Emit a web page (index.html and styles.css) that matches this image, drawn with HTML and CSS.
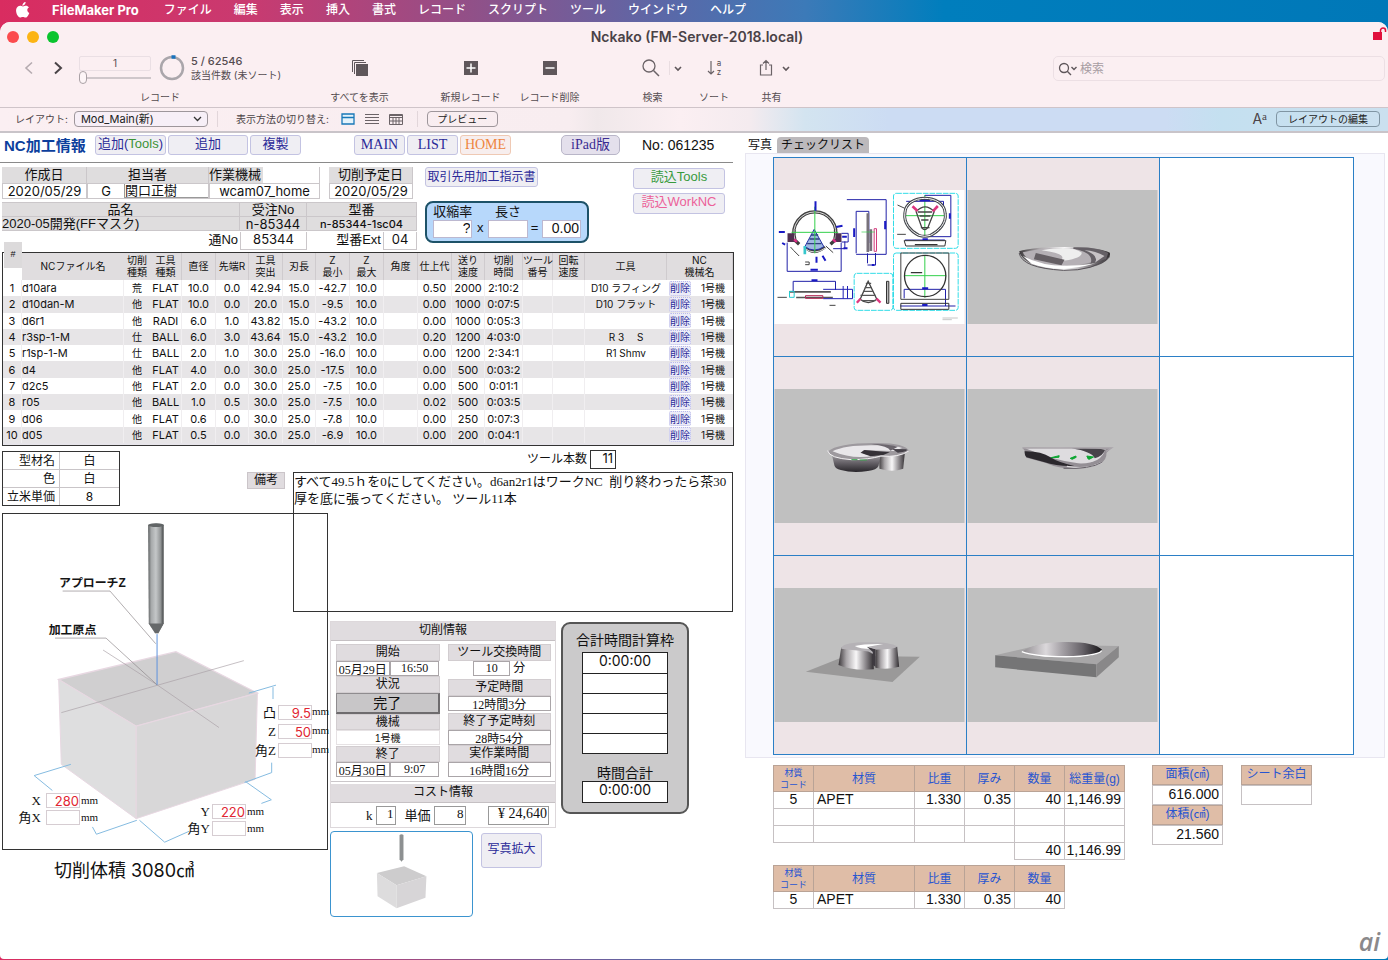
FILE: index.html
```html
<!DOCTYPE html>
<html lang="ja">
<head>
<meta charset="utf-8">
<title>Nckako (FM-Server-2018.local)</title>
<link rel="stylesheet" href="styles.css">
</head>
<body>
<nav class="menubar" aria-label="メニューバー">
  <svg class="apple" viewBox="0 0 14 16" aria-hidden="true"><path d="M9.6 0c.1 1-.3 1.900-.9 2.600-.6.7-1.500 1.200-2.300 1.100-.1-1 .4-1.900.9-2.500C7.900.5 8.900 0 9.600 0zM12.900 5.400c-1 .6-1.600 1.500-1.600 2.600 0 1.300.8 2.400 2 2.900-.3.9-.7 1.700-1.200 2.500-.7 1.100-1.500 2.200-2.600 2.200-1.100 0-1.500-.7-2.700-.7-1.300 0-1.700.7-2.700.7-1.100 0-2-1.200-2.700-2.300C.1 11.200-.5 7.800.8 5.800c.8-1.300 2-2 3.200-2 1.200 0 2 .7 3 .7s1.600-.7 3-.7c1.100 0 2.200.6 2.900 1.600z"/></svg>
  <strong class="app-name">FileMaker Pro</strong>
  <span>ファイル</span><span>編集</span><span>表示</span><span>挿入</span><span>書式</span><span>レコード</span><span>スクリプト</span><span>ツール</span><span>ウインドウ</span><span>ヘルプ</span>
</nav>

<div class="window">
  <header class="titlebar">
    <div class="lights"><i class="red"></i><i class="yellow"></i><i class="green"></i></div>
    <h1>Nckako (FM-Server-2018.local)</h1>
    <svg class="lock" viewBox="0 0 14 13" aria-hidden="true"><path d="M0 5h9v8H0z" fill="#e0103c"/><path d="M7.500 5.500V3.500a2.500 2.500 0 0 1 5 0V5" fill="none" stroke="#e0103c" stroke-width="1.500"/></svg>
  </header>

  <div class="toolbar">
    <div class="records">
      <div class="records-row">
        <button class="icon-btn" aria-label="前のレコード"><svg width="9" height="14" viewBox="0 0 9 14"><path d="M8 1.500 2 7l6 5.500" fill="none" stroke="#b5abb0" stroke-width="1.600"/></svg></button>
        <button class="icon-btn" aria-label="次のレコード"><svg width="9" height="14" viewBox="0 0 9 14"><path d="M1 1.500 7 7l-6 5.500" fill="none" stroke="#4a4448" stroke-width="2"/></svg></button>
        <div class="record-pos">
          <input class="pos-box" value="1" aria-label="レコード番号">
          <input class="pos-slider" type="range" min="1" max="62546" value="1" aria-label="レコード位置">
        </div>
        <svg class="pie" viewBox="0 0 26 26" aria-hidden="true"><circle cx="13" cy="13" r="11" fill="none" stroke="#aaa6ab" stroke-width="2.500"/><path d="M12.500 2h4" stroke="#1972bd" stroke-width="3.500"/></svg>
        <div class="found"><b>5 / 62546</b><span>該当件数 (未ソート)</span></div>
      </div>
      <span class="tool-label">レコード</span>
    </div>
    <button class="tool t-all"><span class="tool-icon"><svg width="18" height="18" viewBox="0 0 18 18"><path d="M1.500 13V1.500H13M3.500 15V3.500H15" fill="none" stroke="#5f575b"/><path d="M5 5h12v12H5z" fill="#5f575b"/></svg></span><span class="tool-label">すべてを表示</span></button>
    <button class="tool t-new"><span class="tool-icon"><svg width="14" height="14" viewBox="0 0 14 14"><path d="M0 0h14v14H0z" fill="#5f575b"/><path d="M2.500 7h9M7 2.500v9" stroke="#fff" stroke-width="1.500"/></svg></span><span class="tool-label">新規レコード</span></button>
    <button class="tool t-del"><span class="tool-icon"><svg width="14" height="14" viewBox="0 0 14 14"><path d="M0 0h14v14H0z" fill="#5f575b"/><path d="M2.500 7h9" stroke="#fff" stroke-width="1.500"/></svg></span><span class="tool-label">レコード削除</span></button>
    <button class="tool t-find"><span class="tool-icon"><svg width="44" height="20" viewBox="0 0 44 20"><circle cx="7" cy="8" r="6" fill="none" stroke="#6b6367" stroke-width="1.300"/><path d="m11.500 12.500 5.500 5.500" stroke="#6b6367" stroke-width="1.500"/><path d="M27.500 3v14" stroke="#e9dde1"/><path d="m33 9 3 3 3-3" fill="none" stroke="#5f575b" stroke-width="1.600"/></svg></span><span class="tool-label">検索</span></button>
    <button class="tool t-sort"><span class="tool-icon"><span class="sort"><svg width="8" height="16" viewBox="0 0 8 16"><path d="M4 1v13M1 11l3 3 3-3" fill="none" stroke="#6b6367" stroke-width="1.200"/></svg><span class="az"><span>a</span><span>z</span></span></span></span><span class="tool-label">ソート</span></button>
    <button class="tool t-share"><span class="tool-icon"><svg width="32" height="18" viewBox="0 0 32 18"><path d="M4 6H1.500v10h11V6H10M7 11V1.500M4 4.500l3-3 3 3" fill="none" stroke="#6b6367" stroke-width="1.200"/><path d="m24 8 3 3 3-3" fill="none" stroke="#5f575b" stroke-width="1.600"/></svg></span><span class="tool-label">共有</span></button>
    <label class="search"><svg width="20" height="14" viewBox="0 0 20 14"><circle cx="6" cy="6" r="4.500" fill="none" stroke="#5f575b" stroke-width="1.300"/><path d="m9 9 4 4M13.500 5l2.500 2.500L18.500 5" fill="none" stroke="#5f575b" stroke-width="1.400"/></svg><input placeholder="検索" aria-label="検索"></label>
  </div>

  <div class="layoutbar">
    <label for="layout">レイアウト:</label>
    <span class="select-wrap"><select id="layout"><option>Mod_Main(新)</option></select><svg width="9" height="6" viewBox="0 0 9 6"><path d="m1 1 3.500 3.500L8 1" fill="none" stroke="#333" stroke-width="1.300"/></svg></span>
    <i class="bar-sep"></i>
    <span class="view-label">表示方法の切り替え:</span>
    <button class="icon-btn" aria-label="フォーム形式"><svg width="14" height="12" viewBox="0 0 14 12"><path d="M1 1h12v10H1zM1 4.500h12" fill="#e4f3fb" stroke="#1878b8" stroke-width="1.300"/></svg></button>
    <button class="icon-btn" aria-label="リスト形式"><svg width="14" height="12" viewBox="0 0 14 12"><path d="M0 1.500h14M0 4.500h14M0 7.500h14M0 10.500h14" stroke="#6b6367"/></svg></button>
    <button class="icon-btn" aria-label="表形式"><svg width="14" height="12" viewBox="0 0 14 12"><path d="M.5 1.500h13v10H.5zM.5 4.500h13M.5 8h13M4 4.500v7M7 4.500v7M10 4.500v7M.5 2.500h13" fill="none" stroke="#6b6367"/></svg></button>
    <i class="bar-sep"></i>
    <button class="mac-btn preview">プレビュー</button>
    <span class="aa">A<sup>a</sup></span>
    <button class="mac-btn edit">レイアウトの編集</button>
  </div>

  <main class="content">
    <section class="left">
      <div class="headrow">
        <h2>NC加工情報</h2>
        <button class="fm c2">追加(<em>Tools</em>)</button>
        <button class="fm c3">追加</button>
        <button class="fm c4">複製</button>
        <button class="fm serif c6">MAIN</button>
        <button class="fm serif c7">LIST</button>
        <button class="fm serif home c8">HOME</button>
        <button class="fm serif ipad c10">iPad版</button>
        <span class="no c12">No: 061235</span>
      </div>

      <div class="info">
        <div class="info-left">
          <div class="job">
            <div class="head">作成日</div><div class="head">担当者</div><label class="head machine">作業機械<input aria-label="作業機械"></label><div class="head last">切削予定日</div>
            <div class="val first">2020/05/29</div><div class="val staff"><span>G</span><input value="関口正樹" aria-label="担当者"></div><div class="val">wcam07_home</div><div class="val last">2020/05/29</div>
          </div>
          <div class="part">
            <div class="head">品名</div><div class="head">受注No</div><div class="head">型番</div>
            <div class="head start">2020-05開発(FFマスク)</div><div class="head">n-85344</div><div class="head small">n-85344-1sc04</div>
          </div>
          <div class="part-no"><label for="tsu">通No</label><input id="tsu" value="85344"><label for="ext">型番Ext</label><input id="ext" value="04"></div>
        </div>
        <div class="info-mid">
          <button class="fm serif order">取引先用加工指示書</button>
          <div class="shrink">
            <label for="rate">収縮率</label><i></i><label for="len">長さ</label><i></i><i></i>
            <input id="rate" value="?"><span>x</span><input id="len"><span>=</span><input value="0.00" aria-label="結果">
          </div>
        </div>
        <div class="info-right"><button class="fm green">読込Tools</button><button class="fm pink">読込WorkNC</button></div>
      </div>

      <div class="nc">
        <span class="hash">#</span>
        <div class="nc-frame">
        <table>
          <colgroup><col class="w19"><col class="w102"><col class="w26"><col class="w32"><col class="w34"><col class="w33"><col class="w34"><col class="w33"><col class="w34"><col class="w34"><col class="w34"><col class="w34"><col class="w33"><col class="w38"><col class="w30"><col class="w32"><col class="w82"><col class="w26"><col class="w40"></colgroup>
          <thead><tr><th class="none"></th><th>NCファイル名</th><th>切削<br>種類</th><th>工具<br>種類</th><th>直径</th><th>先端R</th><th>工具<br>突出</th><th>刃長</th><th>Z<br>最小</th><th>Z<br>最大</th><th>角度</th><th>仕上代</th><th>送り<br>速度</th><th>切削<br>時間</th><th>ツール<br>番号</th><th>回転<br>速度</th><th>工具</th><th colspan="2">NC<br>機械名</th></tr></thead>
          <tbody>
            <tr><td>1</td><td>d10ara</td><td>荒</td><td>FLAT</td><td>10.0</td><td>0.0</td><td>42.94</td><td>15.0</td><td>-42.7</td><td>10.0</td><td></td><td>0.50</td><td>2000</td><td>2:10:2</td><td></td><td></td><td>D10 ラフィング</td><td><button class="del">削除</button></td><td>1号機</td></tr>
            <tr><td>2</td><td>d10dan-M</td><td>他</td><td>FLAT</td><td>10.0</td><td>0.0</td><td>20.0</td><td>15.0</td><td>-9.5</td><td>10.0</td><td></td><td>0.00</td><td>1000</td><td>0:07:5</td><td></td><td></td><td>D10 フラット</td><td><button class="del">削除</button></td><td>1号機</td></tr>
            <tr><td>3</td><td>d6r1</td><td>他</td><td>RADI</td><td>6.0</td><td>1.0</td><td>43.82</td><td>15.0</td><td>-43.2</td><td>10.0</td><td></td><td>0.00</td><td>1000</td><td>0:05:3</td><td></td><td></td><td></td><td><button class="del">削除</button></td><td>1号機</td></tr>
            <tr><td>4</td><td>r3sp-1-M</td><td>仕</td><td>BALL</td><td>6.0</td><td>3.0</td><td>43.64</td><td>15.0</td><td>-43.2</td><td>10.0</td><td></td><td>0.20</td><td>1200</td><td>4:03:0</td><td></td><td></td><td>R 3　 S</td><td><button class="del">削除</button></td><td>1号機</td></tr>
            <tr><td>5</td><td>r1sp-1-M</td><td>仕</td><td>BALL</td><td>2.0</td><td>1.0</td><td>30.0</td><td>25.0</td><td>-16.0</td><td>10.0</td><td></td><td>0.00</td><td>1200</td><td>2:34:1</td><td></td><td></td><td>R1 Shmv</td><td><button class="del">削除</button></td><td>1号機</td></tr>
            <tr><td>6</td><td>d4</td><td>他</td><td>FLAT</td><td>4.0</td><td>0.0</td><td>30.0</td><td>25.0</td><td>-17.5</td><td>10.0</td><td></td><td>0.00</td><td>500</td><td>0:03:2</td><td></td><td></td><td></td><td><button class="del">削除</button></td><td>1号機</td></tr>
            <tr><td>7</td><td>d2c5</td><td>他</td><td>FLAT</td><td>2.0</td><td>0.0</td><td>30.0</td><td>25.0</td><td>-7.5</td><td>10.0</td><td></td><td>0.00</td><td>500</td><td>0:01:1</td><td></td><td></td><td></td><td><button class="del">削除</button></td><td>1号機</td></tr>
            <tr><td>8</td><td>r05</td><td>他</td><td>BALL</td><td>1.0</td><td>0.5</td><td>30.0</td><td>25.0</td><td>-7.5</td><td>10.0</td><td></td><td>0.02</td><td>500</td><td>0:03:5</td><td></td><td></td><td></td><td><button class="del">削除</button></td><td>1号機</td></tr>
            <tr><td>9</td><td>d06</td><td>他</td><td>FLAT</td><td>0.6</td><td>0.0</td><td>30.0</td><td>25.0</td><td>-7.8</td><td>10.0</td><td></td><td>0.00</td><td>250</td><td>0:07:3</td><td></td><td></td><td></td><td><button class="del">削除</button></td><td>1号機</td></tr>
            <tr><td>10</td><td>d05</td><td>他</td><td>FLAT</td><td>0.5</td><td>0.0</td><td>30.0</td><td>25.0</td><td>-6.9</td><td>10.0</td><td></td><td>0.00</td><td>200</td><td>0:04:1</td><td></td><td></td><td></td><td><button class="del">削除</button></td><td>1号機</td></tr>
          </tbody>
        </table>
        </div>
      </div>

      <div class="lower">
        <table class="stock"><tbody><tr><th>型材名</th><td>白</td></tr><tr><th>色</th><td>白</td></tr><tr><th>立米単価</th><td>8</td></tr></tbody></table>
        <div class="count"><label for="cnt">ツール本数</label><input id="cnt" value="11"></div>
        <label class="memo-label" for="memo">備考</label>
        <div class="diagram">
          <svg viewBox="8 10 978 1006" aria-hidden="true">
            <defs><linearGradient id="rod"><stop offset="0" stop-color="#5d6061"/><stop offset=".2" stop-color="#a6a9aa"/><stop offset=".5" stop-color="#c4c7c8"/><stop offset=".8" stop-color="#929596"/><stop offset="1" stop-color="#424546"/></linearGradient></defs>
            <path d="M176 507 530 423 776 548 410 648z" fill="#d0cfd0" stroke="#e8d8e2" stroke-width="4"/>
            <path d="M176 507 410 648V927L184 763z" fill="#dededf" stroke="#e8d8e2" stroke-width="3"/>
            <path d="M410 648 776 548 769 808 410 927z" fill="#d8d7d8" stroke="#e8d8e2" stroke-width="3"/>
            <path d="M184 607 735 450M473 523 660 652M473 523 310 418" fill="none" stroke="#a9a0a6" stroke-width="2"/>
            <path d="M188 240H331L469 399M165 382H319L473 523" fill="none" stroke="#8a8487" stroke-width="2"/>
            <path d="M473 370V523" stroke="#5c91dc" stroke-width="3"/>
            <path d="M750 548 832 524M823 530v36M819 758v30l-82 30M213 763 102 797l55 45M412 932l-122 42-12-22M420 932l76 66 74-33M740 815l78 55-30 11" fill="none" stroke="#84bae0" stroke-width="3"/>
            <path d="M446 40Q470 30 493 40V338L477 367H467L448 338z" fill="url(#rod)"/>
            <path d="M448 338h45l-16 29H467z" fill="#66696a"/><ellipse cx="470" cy="41" rx="23" ry="6" fill="#616566"/>
            <text x="177" y="229" class="dlabel">アプローチZ</text><text x="146" y="369" class="dlabel">加工原点</text>
          </svg>
          <div class="axis ax-x"><label for="x">X</label><input id="x" value="280"><span>mm</span><label for="rx">角X</label><input id="rx"><span>mm</span></div>
          <div class="axis ax-y"><label for="y">Y</label><input id="y" value="220"><span>mm</span><label for="ry">角Y</label><input id="ry"><span>mm</span></div>
          <div class="axis ax-z"><label for="bump">凸</label><input id="bump" value="9.5"><span>mm</span><label for="z">Z</label><input id="z" value="50"><span>mm</span><label for="rz">角Z</label><input id="rz"><span>mm</span></div>
        </div>
        <textarea class="memo" id="memo" spellcheck="false">すべて49.5ｈを0にしてください。d6an2r1はワークNC  削り終わったら茶30
厚を底に張ってください。 ツール11本</textarea>
        <p class="volume">切削体積 3080㎤</p>

        <div class="bottom">
          <div class="panels">
            <div class="cut">
              <h3>切削情報</h3>
              <div class="cut-body">
                <div class="col">
                  <div class="lab">開始</div>
                  <div class="pair"><input value="05月29日" aria-label="開始日"><input value="16:50" aria-label="開始時刻"></div>
                  <div class="lab">状況</div>
                  <button class="done">完了</button>
                  <div class="lab">機械</div>
                  <input class="plain" value="1号機" aria-label="機械">
                  <div class="lab">終了</div>
                  <div class="pair"><input value="05月30日" aria-label="終了日"><input value="9:07" aria-label="終了時刻"></div>
                </div>
                <div class="col right-col">
                  <label class="lab" for="swap">ツール交換時間</label>
                  <div class="swap"><input id="swap" value="10"><span>分</span></div>
                  <label class="lab" for="plan">予定時間</label><input id="plan" value="12時間3分">
                  <label class="lab" for="eta">終了予定時刻</label><input id="eta" value="28時54分">
                  <label class="lab" for="real">実作業時間</label><input id="real" value="16時間16分">
                </div>
              </div>
              <h3>コスト情報</h3>
              <div class="cost"><label for="k">k</label><input id="k" value="1"><label for="unit">単価</label><input id="unit" value="8"><input value="¥ 24,640" aria-label="金額"></div>
            </div>
            <div class="sum">
              <h3>合計時間計算枠</h3>
              <div class="sum-list"><input value="0:00:00" aria-label="時間1"><input aria-label="時間2"><input aria-label="時間3"><input aria-label="時間4"><input aria-label="時間5"></div>
              <h3 class="total">時間合計</h3>
              <div class="sum-list"><input value="0:00:00" aria-label="時間合計"></div>
            </div>
          </div>
          <div class="thumbs">
            <div class="thumb"><svg viewBox="18 665 424 256" aria-hidden="true"><path d="M224 674q6-5 12 0v74l-6 8-6-8z" fill="#8d9091"/><path d="m155 790 83-21 68 31-91 27z" fill="#cdcccd"/><path d="m155 790 60 37v70l-58-36z" fill="#dddcdd"/><path d="m215 827 91-27-3 65-88 32z" fill="#d7d5d7"/></svg></div>
            <button class="fm zoom">写真拡大</button>
          </div>
        </div>
      </div>
    </section>

    <section class="right">
      <div class="tabs"><button class="tab">写真</button><button class="tab on">チェックリスト</button></div>
      <div class="photo-panel">
        <div class="photos">
          <div class="cell pic"><svg viewBox="29 120 570 402" role="img" aria-label="図面">
            <path d="M29 120h570v402H29z" fill="#fff"/>
            <g fill="none" stroke="#3f3f3f" stroke-width="10"><path d="M90 268a63 63 0 1 1 120 0M88 240l-1 28 16 15M212 240l1 28-16 15"/><path d="M120 290q28 28 60 0"/></g>
            <g fill="none" stroke="#ddd" stroke-width="3"><path d="M90 268a63 63 0 1 1 120 0M118 294q30 24 64 0"/></g>
            <path d="M68 250h20v26H68zM212 250h18v26h-18z" fill="#503050"/>
            <path d="m148 238-28 52q28 20 57 0z" fill="#9fb8e2" stroke="#2632a8" stroke-width="3"/><path d="M138 255h22M134 267h29M127 281h43" stroke="#304080" stroke-width="4"/>
            <path d="M150 170v140M80 247h140M480 135v125M418 197h126M480 315v128M418 377h126" stroke="#33d04b" stroke-width="3"/>
            <g fill="none" stroke="#2020a8" stroke-width="3"><path d="M67 278v86h162v-86M85 425v-31h127v26M246 149h118v164h-90M274 184v126M274 184h38v95M308 340v-30M332 345v-36M308 345h25M424 154h112v26M418 445v-27h124v50M480 136h78v124h-78M406 468h166M230 250h20v26h-20M205 296h35V274M420 270h120"/></g>
            <path d="M152 154v28M42 246h18M52 279l9 5M214 231l19-4M137 359h22M140 391h18M268 235v26M361 213v25M464 150h32M555 190v16M155 320v18M173 317l9 15M321 345h8M473 268h16M472 415h18M472 465h16M236 295h12M232 260h14" stroke="#1a1ac4" stroke-width="6"/>
            <path d="M309 190v116M318 238v65" stroke="#77717b" stroke-width="8"/><path d="M328 236v68h7v-68z" fill="none" stroke="#d23c7c" stroke-width="3"/><path d="M290 246h40" stroke="#33d04b" stroke-width="2"/>
            <path d="M73 423h125v5H73zM94 440h110v5H94z" fill="#555"/><path d="M122 437h52v8h-52z" fill="none" stroke="#b42755" stroke-width="3"/><path d="M175 418h88v28h-88M235 408v38M248 408v38" fill="none" stroke="#2222b5" stroke-width="3"/><path d="M74 424h14v18H74z" fill="none" stroke="#27cbd0" stroke-width="3"/>
            <g fill="none" stroke="#32dce7" stroke-width="3" stroke-dasharray="17 3"><rect x="386" y="130" width="194" height="165" rx="8"/><rect x="386" y="309" width="194" height="172" rx="8"/><rect x="268" y="370" width="116" height="111" rx="8"/></g>
            <path d="M420 190c2-60 118-60 121 0 5 30-20 54-44 66q-18 6-35 0c-24-12-46-36-42-66z" fill="none" stroke="#45484d" stroke-width="9"/><path d="M420 190c2-60 118-60 121 0 5 30-20 54-44 66q-18 6-35 0c-24-12-46-36-42-66z" fill="none" stroke="#fff" stroke-width="3"/>
            <path d="M454 185q27-29 54 0l-19 48q-10 12-18 0z" fill="none" stroke="#444" stroke-width="4"/><path d="M459 186h43M464 198h33M469 210h22M468 233h26" stroke="#444" stroke-width="4"/><path d="m443 169 15 14M519 168l-15 16" stroke="#dc377e" stroke-width="8"/>
            <path d="M408 309h144v139H408z" fill="none" stroke="#444" stroke-width="3"/><circle cx="481" cy="378" r="62" fill="none" stroke="#333" stroke-width="4"/><path d="M418 272h125l-3 16H423zM408 460h144v18H408z" fill="none" stroke="#333" stroke-width="3"/><path d="M450 284h68M438 368h34" stroke="#333" stroke-width="4"/>
            <path d="m310 394-24 54q24 20 50 0z" fill="none" stroke="#444" stroke-width="4"/><path d="M303 400h16M300 413h21M296 424h29M287 436h45M292 452h40" stroke="#555" stroke-width="4"/><path d="m276 458 11-12M347 458l-12-12" stroke="#dc377e" stroke-width="7"/><path d="M365 394h7v66h-7z" fill="#bbb" stroke="#333" stroke-width="3"/>
            <path d="M116 288h8v25h-8z" fill="#36c7cc"/><path d="m77 291 9 10 17 17M183 288l22 20M121 336h12v8h-12M38 442h28M398 165l22 10M194 466h18M397 253h26" fill="none" stroke="#444" stroke-width="3"/><path d="M533 504h46M533 509h28" stroke="#aaa" stroke-width="2"/>
            <path d="M88 268l8 8M204 268l9 8" stroke="#df2b89" stroke-width="7"/>
          </svg></div>
          <div class="cell pic"><svg viewBox="607 120 570 402" role="img" aria-label="モデル1">
            <defs><linearGradient id="metal"><stop offset="0" stop-color="#3c383b"/><stop offset=".22" stop-color="#aaa6a9"/><stop offset=".5" stop-color="#f8f7f8"/><stop offset=".78" stop-color="#888488"/><stop offset="1" stop-color="#302d30"/></linearGradient><linearGradient id="metal2"><stop offset="0" stop-color="#8f8b8f"/><stop offset=".3" stop-color="#dbd8db"/><stop offset=".5" stop-color="#a5a1a6"/><stop offset=".75" stop-color="#68646a"/><stop offset="1" stop-color="#161417"/></linearGradient><linearGradient id="bowl" x1="0" y1="0" x2="0" y2="1"><stop offset="0" stop-color="#b5b2b6"/><stop offset=".55" stop-color="#656167"/><stop offset="1" stop-color="#29262b"/></linearGradient></defs>
            <path d="M607 120h570v402H607z" fill="#c0c0c0"/><path d="M762 304C814 286 992 287 1034 308c6 29-50 47-102 52-74 5-160-13-170-56z" fill="url(#metal)"/><path d="M773 307q106-26 249 1 10 25-94 38-137 7-155-39z" fill="#b5b0b5"/><path d="M925 292q74-2 104 17l-6 18-47 15q13-35-52-46z" fill="#656066"/><path d="M958 301q34 2 60 17l-29 20q15-22-31-37z" fill="#c7c3c6"/><path d="M829 301q91-17 121 7-1 19-64 25 25-22-57-32z" fill="#eee"/><path d="m812 309 86 20-9 17-83-18z" fill="#655f64"/><path d="M773 318q86 46 218 22-105 31-191 2z" fill="#fff"/><path d="M762 309q8 45 133 52 91 2 139-41" fill="none" stroke="#555056" stroke-width="3"/>
          </svg></div>
          <div class="cell"></div>
          <div class="cell pic"><svg viewBox="29 87 570 402" role="img" aria-label="モデル2"><path d="M29 87h570v402H29z" fill="#c0c0c0"/><path d="M342 270h79l-6 56q-32 12-71 0z" fill="url(#metal)"/><path d="M199 275q10 18 148 13l-6 30q-5 12-32 15-45 7-81-3-17-5-19-13z" fill="url(#bowl)"/><path d="M188 275q30-26 140-26 90-2 106 24-24 18-78 16-42 11-97 10-58-6-71-24z" fill="#9d999e"/><path d="M203 274q38-19 124-18 60-2 85 8l-24 9-92-2q-17 12 33 16-64 13-126-13z" fill="#e9e7ea"/><path d="m287 278 12-8 76 7-20 8-38 4z" fill="#353137"/><path d="M320 252q44-1 79 8l-22 12q-7-14-57-20z" fill="#6b666d"/><path d="m382 267 43 1q8 7-26 10z" fill="#454148"/><path d="M188 272q6 23 72 27 51 0 88-11 54 5 84-15" fill="none" stroke="#f5f3f5" stroke-width="3"/><path d="M260 299h18m7 1h21" stroke="#38a44d" stroke-width="3"/></svg></div>
          <div class="cell pic"><svg viewBox="607 87 570 402" role="img" aria-label="モデル3"><path d="M607 87h570v402H607z" fill="#c0c0c0"/><path d="M772 263 1040 263l-16 15q2 42-80 48-58 3-102-17l-58-16q-6-5-5-20z" fill="#948f95"/><path d="M780 265q127-6 241 2-13 46-82 43-69-7-159-45z" fill="#dedcdf"/><path d="M919 265q65-4 101 4-5 17-31 26-9-20-70-30z" fill="#48444a"/><path d="M778 274q50-1 78 18 20 14 71 26-50 2-91-12l-52-14q-6-5-6-18z" fill="#2b282d"/><path d="M905 319q61 12 105-12" fill="none" stroke="#dedbde" stroke-width="4"/><path d="M895 325q81 3 115-18" fill="none" stroke="#666168" stroke-width="3"/><path d="M772 264h267l-16 10" fill="none" stroke="#aaa5ab" stroke-width="4"/><path d="m858 293 24-6-1 5zm57 2 17-7 1 4-12 6zm50-7 20 3-13 7-3-1z" fill="#0da632" stroke="#0da632" stroke-width="3"/></svg></div>
          <div class="cell"></div>
          <div class="cell pic"><svg viewBox="29 684 570 402" role="img" aria-label="モデル4"><path d="M29 684h570v402H29z" fill="#c0c0c0"/><path d="m123 935 121-48 221 3-82 76z" fill="#9a9999"/><path d="m332 866 65-6 6 60q-37 10-71 3z" fill="url(#metal)"/><path d="M229 863q64-15 96 6l2 59q-62 6-106-13z" fill="url(#metal)"/><path d="M229 866q2-17 62-19 83-3 106 12-4 10-68 10l-6 13q-7-10-38-10-33-3-56-6z" fill="#b5b2b6"/><path d="M270 858q25-7 85-6l-45 8 20 7q-46 1-60-9z" fill="#fff"/><path d="m306 860 26 8v52l-8-5v-39z" fill="#3e3a40"/></svg></div>
          <div class="cell pic"><svg viewBox="607 684 570 402" role="img" aria-label="モデル5"><path d="M607 684h570v402H607z" fill="#c0c0c0"/><path d="m690 886 135-32 236 4-67 55z" fill="#a7a6a7"/><path d="m690 886 304 27v39l-304-30z" fill="#757576"/><path d="m994 913 67-55v34l-67 60z" fill="#898889"/><path d="M770 875q42-28 125-29 89-2 116 23-3 17-86 23-111 2-155-17z" fill="url(#metal2)"/><path d="M770 875q44 17 155 15 83-6 84-19" fill="none" stroke="#fff" stroke-width="4"/></svg></div>
          <div class="cell"></div>
        </div>
      </div>
      <div class="materials">
        <div class="mat-tables">
          <table class="mat">
            <colgroup><col class="w40"><col class="w101"><col class="w50"><col class="w50"><col class="w50"><col class="w60"></colgroup>
            <thead><tr><th class="tiny">材質<br>コード</th><th>材質</th><th>比重</th><th>厚み</th><th>数量</th><th>総重量(g)</th></tr></thead>
            <tbody><tr><td>5</td><td>APET</td><td>1.330</td><td>0.35</td><td>40</td><td>1,146.99</td></tr><tr><td></td><td></td><td></td><td></td><td></td><td></td></tr><tr><td></td><td></td><td></td><td></td><td></td><td></td></tr></tbody>
            <tfoot><tr><td class="none" colspan="4"></td><td>40</td><td>1,146.99</td></tr></tfoot>
          </table>
          <table class="mat second">
            <colgroup><col class="w40"><col class="w101"><col class="w50"><col class="w50"><col class="w50"></colgroup>
            <thead><tr><th class="tiny">材質<br>コード</th><th>材質</th><th>比重</th><th>厚み</th><th>数量</th></tr></thead>
            <tbody><tr><td>5</td><td>APET</td><td>1.330</td><td>0.35</td><td>40</td></tr></tbody>
          </table>
        </div>
        <div class="side"><label for="area">面積(㎠)</label><input id="area" value="616.000"><label for="vol">体積(㎤)</label><input id="vol" value="21.560"></div>
        <div class="side sheet"><label for="sheet">シート余白</label><input id="sheet"></div>
      </div>
    </section>
  </main>
  <span class="mark">ai</span>
</div>
</body>
</html>
```

FILE: styles.css
```css
* { box-sizing: border-box; }
body, h1, h2, h3, p { margin: 0; }
body {
  min-height: 100vh;
  display: flex;
  flex-direction: column;
  padding-bottom: 1px;
  background: linear-gradient(90deg, #d92c60 0, #c93a70 18%, #915088 34%, #5a68a8 48%, #3c7ab8 58%, #007ebd 68%, #0078b8 100%);
  color: #111;
  font-family: "Liberation Sans", "Noto Sans CJK JP", sans-serif;
  font-size: 13px;
  line-height: 16px;
}
button, input, select, textarea { font: inherit; color: inherit; margin: 0; padding: 0; border: 0; background: none; border-radius: 0; min-width: 0; }
input, textarea, select { outline: 0; appearance: none; }
svg { display: block; }
i { display: block; }

.menubar { height: 22px; flex: none; display: flex; align-items: center; gap: 22px; padding: 0 0 2px 16px; color: #fff; font: 500 12px/18px Inter, "Noto Sans CJK JP", sans-serif; white-space: nowrap; }
.apple { width: 14px; height: 16px; fill: #fff; }
.app-name { font-size: 13px; font-weight: 700; margin-right: 3px; }

.window { flex: 1; background: #fff; border-radius: 10px 10px 4px 4px; overflow: hidden; position: relative; }
.titlebar { height: 29px; display: grid; grid-template-columns: 1fr auto 1fr; align-items: center; background: #fbeff2; padding: 0 1px 0 7px; }
.titlebar h1 { font: 600 14px/18px Inter, sans-serif; color: #4a4247; }
.lights { display: flex; gap: 8px; }
.lights i { width: 12px; height: 12px; border-radius: 50%; }
.red { background: #fb4b4e; } .yellow { background: #fcb414; } .green { background: #0ac42e; }
.lock { width: 14px; height: 13px; justify-self: end; align-self: start; margin-top: 5px; }

.toolbar { height: 57px; background: #fbeff2; display: grid; grid-template-columns: 320px 79px 32px 79px 79px 30px 67px 56px 59px 1fr; border-bottom: 1px solid #cfc4c9; font-family: Inter, "Noto Sans CJK JP", sans-serif; color: #544c50; }
.records, .tool { display: flex; flex-direction: column; align-items: center; justify-content: space-between; padding: 1px 0 3px; }
.records-row { height: 32px; width: 100%; display: flex; align-items: center; padding-left: 24px; }
.icon-btn { display: grid; place-items: center; }
.records-row .icon-btn + .icon-btn { margin-left: 21px; }
.record-pos { width: 72px; margin: 0 8px 0 16px; display: flex; flex-direction: column; padding-top: 4px; }
.pos-box { height: 15px; width: 100%; border: 1px solid #eadfe4; border-radius: 2px; text-align: center; font-size: 10px; }
.pos-slider { height: 14px; width: 100%; background: linear-gradient(#cfc7cb, #cfc7cb) center / 100% 2px no-repeat; }
.pos-slider::-webkit-slider-thumb { appearance: none; width: 8px; height: 13px; border: 1px solid #aaa1a6; border-radius: 4px; background: #fdf5f7; }
.pie { width: 26px; height: 26px; margin-right: 6px; }
.found { display: flex; flex-direction: column; font-size: 10px; line-height: 14px; white-space: nowrap; }
.found b { font-size: 11px; font-weight: 500; }
.tool-label { font-size: 10px; line-height: 14px; white-space: nowrap; }
.tool-icon { height: 32px; display: grid; place-items: center; }
.t-new { grid-column: 4; } .t-del { grid-column: 5; } .t-find { grid-column: 7; }
.t-find svg { margin-left: 22px; } .t-share svg { margin-left: 6px; }
.sort { display: flex; gap: 2px; align-items: center; }
.az { display: flex; flex-direction: column; font: 8px/9px Inter, sans-serif; }
.search { justify-self: end; width: 332px; height: 25px; margin: 5px 3px 0 0; border: 1px solid #ecdfe4; border-radius: 5px; display: flex; align-items: center; gap: 2px; padding-left: 4px; font-size: 12px; }
.search input { flex: 1; height: 20px; }
.search input::placeholder { color: #a79da2; }

.layoutbar { height: 25px; display: flex; align-items: center; padding: 0 8px 1px 15px; background: linear-gradient(90deg, #fbeff2 0, #f8edf0 41%, #f0e8ea 43%, #fbeff2 49%, #f4ebef 54%, #d3e4f0 58%, #ccdcf3 64%, #ccdcf3 84%, #c4e0f0 88%, #cbe0ef 100%); border-bottom: 2px solid #c9c4c9; font: 10px/14px Inter, "Noto Sans CJK JP", sans-serif; color: #4b4347; }
.select-wrap { display: grid; align-items: center; margin-left: 6px; }
.select-wrap > * { grid-area: 1 / 1; }
.select-wrap svg { justify-self: end; margin-right: 6px; pointer-events: none; }
#layout { width: 134px; height: 16px; border: 1px solid #9e969b; border-radius: 4px; padding-left: 6px; background: #f7eff7; font-size: 11px; line-height: 14px; color: #222; }
.bar-sep { width: 1px; height: 16px; background: #e2d6da; margin: 0 9px; }
.view-label { margin: 0 12px 0 9px; }
.layoutbar .icon-btn + .icon-btn { margin-left: 10px; }
.layoutbar .icon-btn + .bar-sep { margin-left: 14px; }
.mac-btn { height: 16px; border: 1px solid #9e969b; border-radius: 4px; color: #222; line-height: 12px; }
.preview { width: 71px; }
.edit { width: 104px; border-color: #8095a3; font-size: 10px; }
.aa { margin: 0 9px 0 auto; font-size: 14px; line-height: 16px; }
.aa sup { font: 11px/8px "Liberation Serif", serif; vertical-align: 4px; }

.content { display: grid; grid-template-columns: minmax(0, 733fr) minmax(0, 655fr); align-items: start; }
.serif { font-family: "Liberation Serif", "Noto Sans CJK JP", serif; }
.fm { border: 1px solid #c3c3e2; border-radius: 3px; background: #efeef3; color: #2a2a98; white-space: nowrap; line-height: 16px; }
.head { background: #dfddde; }

.headrow { height: 30px; margin-bottom: 4px; padding: 1px 0 7px 4px; border-bottom: 1px solid #8a8a8a; display: grid; grid-template-columns: 88fr 3fr 71fr 2fr 80fr 2fr 51fr 53fr 51fr 2fr 51fr 2fr 51fr 50fr 59fr 22fr 91fr; }
.headrow > * { min-width: 0; }
.headrow h2 { font-size: 15px; line-height: 24px; color: #0c3f9d; white-space: nowrap; }
.headrow .fm { font-size: 13px; height: 20px; margin-top: 1px; padding-bottom: 3px; }
.headrow .serif { font-size: 14px; padding: 0; }
.headrow em { font-style: normal; color: #3b9336; }
.c2 { grid-column: 3; } .c3 { grid-column: 5; } .c4 { grid-column: 7; } .c6 { grid-column: 9; } .c7 { grid-column: 11; } .c8 { grid-column: 13; } .c10 { grid-column: 15; } .c12 { grid-column: 17; }
.home.fm { color: #ee8540; border-color: #efc9b4; background: #f7eeee; }
.ipad.fm { background: #e4e0ec; border-color: #b9b6c8; border-radius: 5px; color: #3b2c92; }
.no { font-size: 14px; line-height: 22px; white-space: nowrap; }

.info { height: 85px; display: grid; grid-template-columns: minmax(0, 417fr) 8fr minmax(0, 164fr) 44fr minmax(0, 92fr) 8fr; }
.info-left { padding-left: 2px; }
.info-mid { grid-column: 3; }
.info-right { grid-column: 5; display: flex; flex-direction: column; gap: 4px; padding-top: 1px; }
.info-right .fm { height: 21px; font-size: 13px; padding-bottom: 3px; }
.green.fm { color: #379a3c; } .pink.fm { color: #ec6199; }
.job { display: grid; grid-template-columns: 85fr 122fr 111fr 93fr 4fr; grid-template-rows: 17px 15px; text-align: center; }
.job > * { min-width: 0; border: 1px solid #cbc7ca; border-width: 0 1px 1px 0; font-size: 13px; white-space: nowrap; }
.job > .first { grid-column: 1; }
.job > .last { margin-left: 9px; grid-column: 4; }
.job .val { line-height: 15px; border-left-width: 1px; font-family: Inter, "Noto Sans CJK JP", sans-serif; }
.machine { display: flex; }
.machine input { flex: 1; background: #fff; margin-left: 2px; }
.staff { display: grid; grid-template-columns: 36fr 84fr; }
.staff input { border: 1px solid #999; border-width: 0 0 1px 1px; height: 14px; }
.part { display: grid; grid-template-columns: 238fr 67fr 110fr; grid-auto-rows: 14px; margin-top: 3px; text-align: center; border-top: 1px solid #cbc7ca; }
.part > * { min-width: 0; white-space: nowrap; line-height: 14px; border: 1px solid #cbc7ca; border-width: 0 1px 1px 0; }
.part .start { text-align: left; }
.part .small { font: 500 11px/14px Inter, sans-serif; }
.part .head:nth-child(5) { font-family: Inter, sans-serif; }
.part-no { display: grid; grid-template-columns: 238fr 67fr 76fr 34fr; height: 19px; margin-top: 1px; text-align: right; }
.part-no label { padding-right: 2px; }
.part-no input { border: 1px solid #cbc7ca; border-top: 0; text-align: center; height: 18px; width: 100%; padding-bottom: 3px; font-family: Inter, sans-serif; }
.order.fm { width: 113px; height: 20px; font-size: 12px; }
.shrink { margin-top: 14px; height: 42px; border: 2px solid #1d5268; border-radius: 8px; background: #b7d8fb; display: grid; grid-template-columns: 40fr 16fr 40fr 14fr 40fr; grid-template-rows: 17px 18px; padding: 0 6px; text-align: center; font-size: 13px; }
.shrink label { white-space: nowrap; line-height: 17px; }
.shrink input { width: 100%; background: #fff; border: 1px solid #bcb8d0; text-align: right; padding: 0 1px 3px 0; font-size: 14px; }

.nc { margin-left: 2px; display: grid; }
.nc > * { grid-area: 1 / 1; }
.hash { z-index: 1; width: 18px; height: 26px; margin: -10px 0 0 2px; background: #dcdadb; text-align: center; font-size: 9px; line-height: 24px; }
.nc-frame { border: 1px solid #333; background: #e7e5ea; padding-bottom: 2px; }
.nc table { width: 100%; height: 190px; table-layout: fixed; border-spacing: 0; font: 11px/14px Inter, "Noto Sans CJK JP", sans-serif; background: #fff; }
.nc th { height: 27px; padding: 0 0 1px; background: #e0dddf; border-right: 1px solid #cfcbce; font-weight: 400; font-size: 10px; line-height: 12px; white-space: nowrap; }
.nc th.none { background: #fff; border: 0; }
.nc th:nth-child(2), .nc th:nth-child(3) { border: 0; }
.nc td { height: 16px; padding: 0; text-align: center; white-space: nowrap; border-right: 1px solid #f0eef0; }
.nc td:nth-child(2) { text-align: left; }
.nc td:nth-child(3), .nc td:nth-child(18), .nc td:nth-child(19), .nc td:nth-child(17) { font-size: 10px; border-right: 0; }
.nc tbody tr:nth-child(even) { background: #e7e5e7; }
.del { display: block; height: 15px; width: 22px; margin: 0 auto; border: 1px dotted #b9b9ea; border-radius: 2px; background: #ececf8; color: #2a2a98; font-size: 10px; line-height: 12px; }
.w19 { width: 19px; } .w26 { width: 26px; } .w30 { width: 30px; } .w32 { width: 32px; } .w33 { width: 33px; } .w34 { width: 34px; } .w38 { width: 38px; } .w82 { width: 82px; } .w102 { width: 102px; }
.w40 { width: 40px; } .w50 { width: 50px; } .w60 { width: 60px; } .w101 { width: 101px; }

.lower { display: grid; grid-template-columns: minmax(0, 291fr) minmax(0, 35fr) minmax(0, 405fr); grid-template-rows: 26px 41px 99px 238px auto; margin-left: 2px; }
.stock { grid-area: 1 / 1 / 3 / 2; width: 118px; height: 55px; margin-top: 5px; border-collapse: collapse; outline: 1px solid #333; outline-offset: -1px; font: 12px/17px Inter, "Noto Sans CJK JP", sans-serif; }
.stock th, .stock td { padding: 0 4px 0 0; border: 1px solid #c9c5c8; font-weight: 400; text-align: right; }
.stock td { text-align: center; width: 60px; padding: 0; }
.count { grid-area: 1 / 3; display: flex; margin-left: 199px; align-items: center; gap: 3px; font-size: 12px; }
.count input { width: 26px; height: 19px; border: 1px solid #333; text-align: right; padding: 0 2px 3px 0; font: 13px/14px Inter, sans-serif; }
.count label { white-space: nowrap; }
.memo-label { grid-area: 2 / 1; justify-self: end; margin-right: 8px; width: 38px; height: 17px; background: #e0dcdf; border: 1px solid #cbc5c9; text-align: center; font-size: 12px; line-height: 15px; }
.memo { grid-area: 2 / 2 / 4 / 4; width: 100%; height: 100%; background: #fff; border: 1px solid #333; resize: none; overflow: hidden; white-space: pre; padding: 0; font: 13px/17px "Liberation Serif", "Noto Sans CJK JP", serif; }
.diagram { grid-area: 3 / 1 / 5 / 3; border: 1px solid #333; position: relative; height: 337px; }
.diagram > svg { width: 100%; height: 100%; }
.dlabel { font: 700 36px "Liberation Sans", "Noto Sans CJK JP", sans-serif; fill: #151515; }
.axis { position: absolute; display: grid; grid-template-columns: 28px 34px 16px; row-gap: 2px; font: 13px/15px "Liberation Serif", "Noto Sans CJK JP", serif; }
.axis label { text-align: right; padding-right: 5px; white-space: nowrap; }
.axis input { width: 100%; height: 15px; border: 1px solid #d6cdd2; background: #fff; color: #e12531; text-align: right; font: 13px/13px Inter, sans-serif; }
.axis span { font-size: 11px; padding-left: 1px; }
.ax-x { left: 15px; top: 279px; }
.ax-y { left: 181px; top: 290px; }
.ax-z { left: 247px; top: 191px; row-gap: 4px; }
.ax-z label, .ax-y label { padding-right: 2px; }
.ax-z span { padding-left: 0; line-height: 12px; }
.volume { grid-area: 5 / 1; margin: 10px 0 0 52px; font: 18px/22px Inter, "Noto Sans CJK JP", sans-serif; white-space: nowrap; }

.bottom { grid-area: 4 / 3 / 6 / 4; padding: 9px 0 0 2px; }
.panels { display: flex; gap: 5px; align-items: flex-start; }
.cut { width: 226px; border: 1px solid #ddd8db; font: 12px/15px "Liberation Serif", "Noto Sans CJK JP", serif; }
.cut h3 { height: 19px; background: #e0dcdf; border-bottom: 1px solid #c5c0c3; text-align: center; font-weight: 400; font-size: 12px; line-height: 17px; }
.cut-body { display: grid; grid-template-columns: 1fr 1fr; gap: 8px; padding: 3px 4px 4px 5px; border-bottom: 1px solid #cbc7ca; margin-bottom: 2px; }
.col { display: grid; grid-template-rows: 17px 15px 17px 21px 16px 16px 16px 15px; }
.col > *, .pair input { min-width: 0; }
.col input { width: 100%; height: 15px; border: 1px solid #aaa5a8; text-align: center; background: #fff; font-size: 12px; line-height: 12px; }
.lab { background: #e0dcdf; border: 1px solid #d2cdd0; text-align: center; white-space: nowrap; line-height: 14px; }
.pair { display: grid; grid-template-columns: 54fr 50fr; }
.col .plain { border-color: #e6e2e4; font: 10px/12px "Liberation Sans", "Noto Sans CJK JP", sans-serif; }
.done { background: #c8c6c8; border: 1px solid #8f8c8f; border-right: 2px solid #6e6b6e; border-bottom: 2px solid #6e6b6e; font: 14px/14px "Liberation Sans", "Noto Sans CJK JP", sans-serif; }
.right-col { grid-template-rows: 17px 18px 17px 17px 17px 15px 17px 15px; }
.swap { display: flex; justify-content: center; gap: 3px; }
.col .swap input { width: 37px; }
.cost { height: 24px; display: flex; align-items: center; padding-right: 6px; font-size: 13px; }
.cost input { border: 1px solid #999; height: 19px; text-align: right; padding: 0 1px 2px 0; background: #fff; }
.cost label { margin: 0 3px 0 9px; white-space: nowrap; }
.cost label:first-child { margin-left: 35px; }
#k { width: 20px; } #unit { width: 32px; }
.cost input:last-child { width: 61px; margin-left: auto; font-size: 14px; }
.sum { width: 128px; border: 2px solid #555; border-radius: 9px; background: #cbcacb; margin-top: 1px; padding: 6px 19px 9px; text-align: center; }
.sum h3 { font-size: 14px; font-weight: 400; line-height: 20px; white-space: nowrap; margin: 0 -12px 2px; }
.sum .total { margin-top: 9px; margin-bottom: -2px; }
.sum-list { display: flex; flex-direction: column; border: 1px solid #222; background: #fff; }
.sum-list input { height: 20px; width: 100%; text-align: center; padding-bottom: 5px; font: 14px/14px Inter, sans-serif; }
.sum-list input + input { border-top: 1px solid #222; }
.thumbs { display: flex; gap: 8px; align-items: flex-start; margin-top: 3px; }
.thumb { width: 143px; height: 86px; border: 1px solid #3b94cf; border-radius: 4px; }
.thumb svg { width: 100%; height: 100%; }
.zoom.fm { width: 61px; height: 35px; margin-top: 2px; font-size: 12px; padding-bottom: 3px; }

.right { padding: 4px 3px 0 12px; }
.tabs { display: flex; gap: 3px; height: 16px; padding-left: 3px; }
.tab { font-size: 12px; line-height: 16px; white-space: nowrap; }
.tab.on { background: #bcb9bc; border-radius: 4px 4px 0 0; padding: 0 4px; margin-left: 2px; }
.photo-panel { border: 1px solid #e8e6f0; background: #f9f9fe; padding: 3px 30px 2px 27px; }
.photos { display: grid; grid-template-columns: repeat(3, minmax(0, 1fr)); grid-template-rows: 199px 199px 198px; border: 1px solid #2b7fc6; }
.cell { background: #fff; border: 1px solid #2b7fc6; border-width: 0 1px 1px 0; }
.cell:nth-child(3n) { border-right: 0; } .cell:nth-child(n+7) { border-bottom: 0; }
.pic { background: #eee4e7; display: grid; place-items: center; padding-right: 1px; }
.pic svg { width: 100%; height: 134px; }
.materials { display: grid; grid-template-columns: minmax(0, 351fr) 28fr minmax(0, 71fr) 18fr minmax(0, 71fr) 73fr; margin: 7px 0 0 28px; align-items: start; }
.mat { width: 100%; table-layout: fixed; border-collapse: collapse; font-size: 14px; line-height: 16px; }
.mat th { height: 26px; padding: 0; background: #dfbda7; border: 1px solid #b9a396; color: #2855d1; font-size: 12px; font-weight: 400; white-space: nowrap; }
.mat th.tiny { font-size: 9px; line-height: 12px; }
.mat td { height: 17px; padding: 0 3px 2px; border: 1px solid #c6c1c3; text-align: right; line-height: 14px; white-space: nowrap; }
.mat tbody td:first-child { text-align: center; }
.mat tbody td:nth-child(2) { text-align: left; }
.mat td.none { border-left: 0; border-bottom: 0; }
.mat tfoot td:last-child, .mat tbody td:last-child { padding-left: 0; }
.second { width: 83%; margin-top: 5px; }
.side { grid-column: 3; display: grid; grid-template-rows: 20px 20px 20px 20px; }
.sheet { grid-column: 5; grid-template-rows: 20px 20px; }
.side label { background: #dfbda7; border: 1px solid #b9a396; color: #2855d1; text-align: center; font-size: 12px; line-height: 16px; white-space: nowrap; }
.side input { width: 100%; border: 1px solid #c6c1c3; text-align: right; padding: 0 3px 3px 0; font-size: 14px; }
.mark { position: absolute; right: 5px; bottom: 0; padding-right: 3px; font: italic 600 25px/36px "Open Sans", sans-serif; color: #8b898b; }
```
